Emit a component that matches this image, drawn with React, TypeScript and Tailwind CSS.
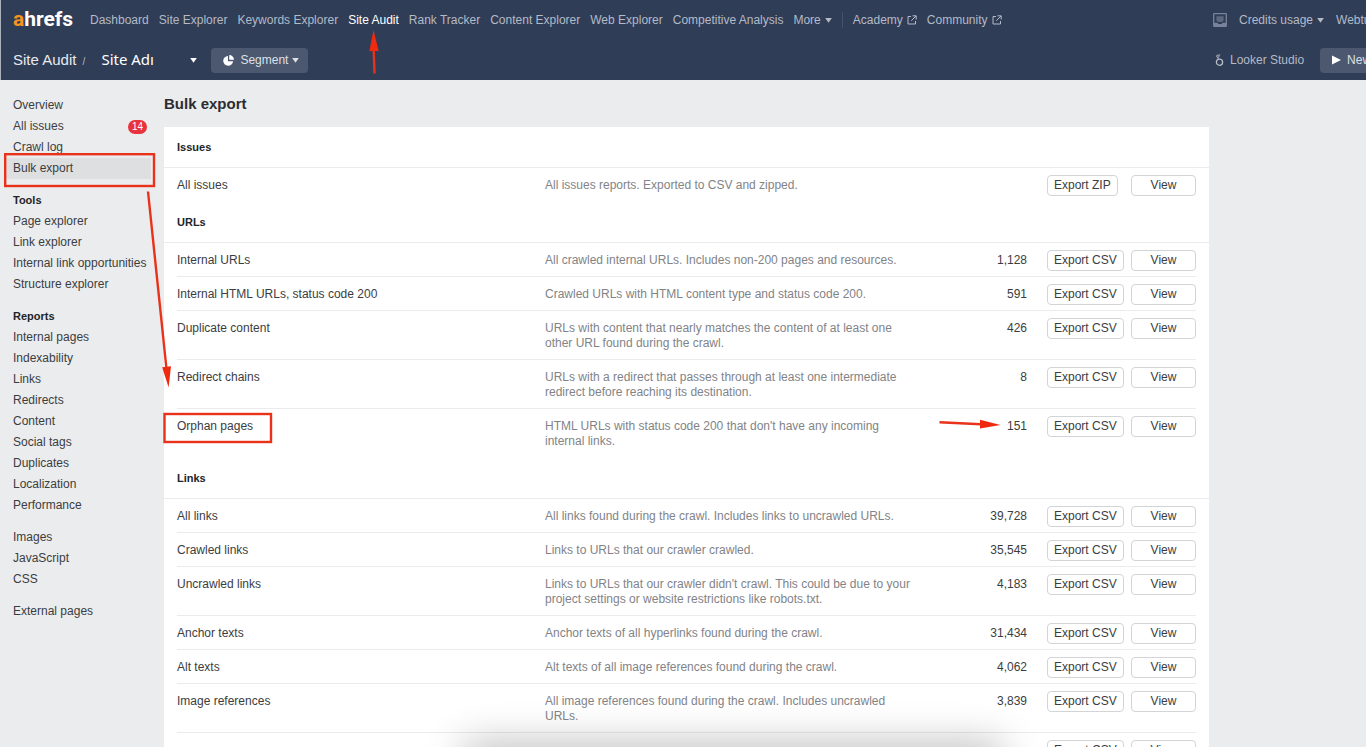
import clsx from 'clsx'

interface ExportRow {
  name: string
  desc: string
  count?: string
  format?: string
}

interface ExportSection {
  title: string
  rows: ExportRow[]
}

interface MenuGroup {
  title?: string
  items: string[]
}

const NAV = [
  'Dashboard',
  'Site Explorer',
  'Keywords Explorer',
  'Site Audit',
  'Rank Tracker',
  'Content Explorer',
  'Web Explorer',
  'Competitive Analysis',
]

const MENU: MenuGroup[] = [
  { items: ['Overview', 'All issues', 'Crawl log', 'Bulk export'] },
  { title: 'Tools', items: ['Page explorer', 'Link explorer', 'Internal link opportunities', 'Structure explorer'] },
  {
    title: 'Reports',
    items: ['Internal pages', 'Indexability', 'Links', 'Redirects', 'Content', 'Social tags', 'Duplicates', 'Localization', 'Performance'],
  },
  { items: ['Images', 'JavaScript', 'CSS'] },
  { items: ['External pages'] },
]

const SECTIONS: ExportSection[] = [
  {
    title: 'Issues',
    rows: [{ name: 'All issues', desc: 'All issues reports. Exported to CSV and zipped.', format: 'ZIP' }],
  },
  {
    title: 'URLs',
    rows: [
      { name: 'Internal URLs', desc: 'All crawled internal URLs. Includes non-200 pages and resources.', count: '1,128' },
      { name: 'Internal HTML URLs, status code 200', desc: 'Crawled URLs with HTML content type and status code 200.', count: '591' },
      { name: 'Duplicate content', desc: 'URLs with content that nearly matches the content of at least one other URL found during the crawl.', count: '426' },
      { name: 'Redirect chains', desc: 'URLs with a redirect that passes through at least one intermediate redirect before reaching its destination.', count: '8' },
      { name: 'Orphan pages', desc: "HTML URLs with status code 200 that don't have any incoming internal links.", count: '151' },
    ],
  },
  {
    title: 'Links',
    rows: [
      { name: 'All links', desc: 'All links found during the crawl. Includes links to uncrawled URLs.', count: '39,728' },
      { name: 'Crawled links', desc: 'Links to URLs that our crawler crawled.', count: '35,545' },
      { name: 'Uncrawled links', desc: "Links to URLs that our crawler didn't crawl. This could be due to your project settings or website restrictions like robots.txt.", count: '4,183' },
      { name: 'Anchor texts', desc: 'Anchor texts of all hyperlinks found during the crawl.', count: '31,434' },
      { name: 'Alt texts', desc: 'Alt texts of all image references found during the crawl.', count: '4,062' },
      { name: 'Image references', desc: 'All image references found during the crawl. Includes uncrawled URLs.', count: '3,839' },
      { name: '', desc: '' },
    ],
  },
]

function Caret() {
  return (
    <svg width="7" height="5" viewBox="0 0 7 5" fill="currentColor" aria-hidden="true">
      <path d="M0.2 0h6.6L3.5 4.8z" />
    </svg>
  )
}

function ExternalIcon() {
  return (
    <svg width="10" height="10" viewBox="0 0 10 10" fill="none" stroke="currentColor" aria-hidden="true">
      <path d="M4 1.5H1v7.5h7.5V6M5.5 0.8h3.7v3.7M9 1 4.3 5.7" />
    </svg>
  )
}

function Header() {
  return (
    <header className="shrink-0 overflow-hidden whitespace-nowrap border-l border-[#aab1bd] bg-[#2f3d57] text-xs text-[#b4bac6]">
      <div className="flex h-10 items-center pl-3">
        <a href="#" className="mr-4 w-[61px] pb-[2px] font-['Roboto',sans-serif] text-[21px] font-bold leading-6 text-white">
          <span className="text-[#f7931e]">a</span>hrefs
        </a>
        <nav className="flex items-center gap-[10px]">
          {NAV.map((item) => (
            <a key={item} href="#" className={clsx(item === 'Site Audit' && 'text-white')}>
              {item}
            </a>
          ))}
          <button type="button" className="flex items-center gap-1">
            More <Caret />
          </button>
        </nav>
        <div className="mx-[10px] h-4 w-px bg-[#46526a]" />
        <a href="#" className="mr-[10px] flex items-center gap-1">
          Academy <ExternalIcon />
        </a>
        <a href="#" className="flex items-center gap-1">
          Community <ExternalIcon />
        </a>
        <div className="ml-auto flex w-[153px] shrink-0 items-center overflow-hidden">
          <button type="button" aria-label="Inbox" className="mr-3 shrink-0">
            <svg width="14" height="14" viewBox="0 0 14 14" fill="none" aria-hidden="true">
              <rect x="0.7" y="0.7" width="12.6" height="12.6" rx="0.6" fill="#2f3d57" stroke="#78829a" strokeWidth="1.3" />
              <path d="M1 9.8h3.4l1 1.1h3.2l1-1.1H13V13H1z" fill="#78829a" />
              <path d="M3.4 3.2h7.2v4.4L9 9H5L3.4 7.6z" fill="#5d6880" />
            </svg>
          </button>
          <button type="button" className="mr-3 flex shrink-0 items-center gap-1">
            Credits usage <Caret />
          </button>
          <a href="#" className="shrink-0">Webtu</a>
        </div>
      </div>
      <div className="flex h-10 items-center pl-3">
        <a href="#" className="text-[15px] text-[#e6e9ee]">Site Audit</a>
        <span className="ml-[6px] w-[19px] pt-1 text-[10px]">/</span>
        <button type="button" className="flex w-24 items-center justify-between text-white">
          <span className="pb-[3px] font-['Noto_Sans',sans-serif] text-[15px] leading-5">Site Adı</span>
          <Caret />
        </button>
        <button type="button" className="ml-[14px] flex h-[25px] items-center rounded-sm bg-[#4c5770] pl-3 pr-[9px] text-[#dde0e6]">
          <svg className="mr-[6px]" width="11" height="11" viewBox="0 0 12 12" fill="#fff" aria-hidden="true">
            <path d="M5.4 1A5.4 5.4 0 1 0 11 6.8H5.4z" />
            <path d="M6.8 0v5.2H12A5.3 5.3 0 0 0 6.8 0z" />
          </svg>
          <span className="mr-1">Segment</span>
          <Caret />
        </button>
        <div className="ml-auto flex w-[151px] shrink-0 items-center overflow-hidden">
          <a href="#" className="mr-4 flex shrink-0 items-center gap-[6px]">
            <svg width="9" height="12" viewBox="0 0 9 12" fill="none" stroke="currentColor" aria-hidden="true">
              <circle cx="4.5" cy="8.2" r="3.1" strokeWidth="1.3" />
              <path d="M3.5 5.2 2.6 3.4" />
              <circle cx="2.8" cy="2.2" r="1.2" />
              <path d="M4 1.2 5.2 0.8" />
            </svg>
            Looker Studio
          </a>
          <button type="button" className="flex h-[25px] shrink-0 items-center gap-[6px] rounded-sm bg-[#4c5770] pl-3 pr-8 text-[#dde0e6]">
            <svg width="9" height="10" viewBox="0 0 9 10" fill="#fff" aria-hidden="true">
              <path d="M0 0.5 9 5 0 9.5z" />
            </svg>
            New
          </button>
        </div>
      </div>
    </header>
  )
}

function Sidebar() {
  return (
    <aside className="flex w-[164px] shrink-0 flex-col gap-[11px] pl-[5px] pr-[13px] pt-[15px] text-xs text-[#3b3d41]">
      {MENU.map((group, i) => (
        <div key={i}>
          {group.title && <h2 className="px-2 text-[11px] font-bold leading-[21px] text-[#222427]">{group.title}</h2>}
          <ul>
            {group.items.map((item) => (
              <li key={item}>
                <a
                  href="#"
                  className={clsx(
                    'flex items-center justify-between whitespace-nowrap pl-2 leading-[21px]',
                    item === 'Bulk export' && 'bg-[#dedfe1]',
                  )}
                >
                  {item}
                  {item === 'All issues' && (
                    <span className="mr-1 h-[14px] rounded-full bg-[#e8323c] px-1 text-[10px] leading-[14px] text-white">14</span>
                  )}
                </a>
              </li>
            ))}
          </ul>
        </div>
      ))}
    </aside>
  )
}

const exportButton = 'h-[21px] rounded-sm border border-[#d3d4d6] bg-white text-[#3b3d41]'

function Section({ title, rows }: ExportSection) {
  return (
    <section>
      <h2 className="border-b border-[#ebebed] px-[13px] text-[11px] font-bold leading-10 text-[#222427]">{title}</h2>
      <div className="px-[13px]">
        <table className="w-full table-fixed border-separate border-spacing-0 leading-[15px]">
          <colgroup>
            <col className="w-[368px]" />
            <col />
            <col className="w-[80px]" />
            <col className="w-[84px]" />
            <col className="w-[65px]" />
          </colgroup>
          <tbody>
            {rows.map((row, i) => {
              const line = i === rows.length - 1 ? 'border-transparent' : 'border-[#ebebed]'
              return (
                <tr key={i} className="align-top">
                  <td className={clsx('h-[34px] border-b pt-[10px]', line)}>{row.name}</td>
                  <td className={clsx('border-b pb-2 pt-[10px] text-[#828387]', line)}>
                    <p className="max-w-[373px]">{row.desc}</p>
                  </td>
                  <td className={clsx('border-b pr-5 pt-[10px] text-right', line)}>{row.count}</td>
                  <td className={clsx('border-b pt-[7px]', line)}>
                    <button type="button" className={clsx(exportButton, 'block px-[6px]')}>
                      Export {row.format ?? 'CSV'}
                    </button>
                  </td>
                  <td className={clsx('border-b pt-[7px]', line)}>
                    <button type="button" className={clsx(exportButton, 'block w-full')}>View</button>
                  </td>
                </tr>
              )
            })}
          </tbody>
        </table>
      </div>
    </section>
  )
}

// hand-drawn marks pointing out where to click
function Annotations() {
  return (
    <svg className="pointer-events-none absolute left-0 top-0" width="1010" height="450" fill="none" stroke="#e8321a" strokeWidth="2.4" aria-hidden="true">
      <rect x="5.2" y="154.2" width="148.8" height="31.8" />
      <rect x="164.5" y="414" width="106.5" height="28" />
      <path d="M374.5 73.5 373.7 50M148 191.5 166.4 368M939.5 422.3 981 424.3" />
      <g fill="#f02a10" stroke="none">
        <path d="M373.5 30 378.6 51h-9.2z" />
        <path d="M168.6 387.5 162.2 367.2l8.8-1z" />
        <path d="M1000.5 425 980 419.8v8.8z" />
      </g>
    </svg>
  )
}

export default function App() {
  return (
    <div className="relative flex h-screen flex-col overflow-hidden bg-[#ebecee] font-['Liberation_Sans',Arial,sans-serif] text-xs text-[#3b3d41]">
      <Header />
      <div className="flex min-h-0 flex-1">
        <Sidebar />
        <main className="min-w-0 flex-1 overflow-hidden">
          <h1 className="py-[14px] text-[15px] font-bold leading-[19px] text-[#2b2d31]">Bulk export</h1>
          <div className="max-w-[1045px] bg-white">
            {SECTIONS.map((section) => (
              <Section key={section.title} {...section} />
            ))}
          </div>
        </main>
      </div>
      <Annotations />
      <div className="pointer-events-none absolute -bottom-6 left-[470px] right-[370px] h-5 shadow-[0_0_40px_6px_rgba(0,0,0,0.3)]" />
    </div>
  )
}
